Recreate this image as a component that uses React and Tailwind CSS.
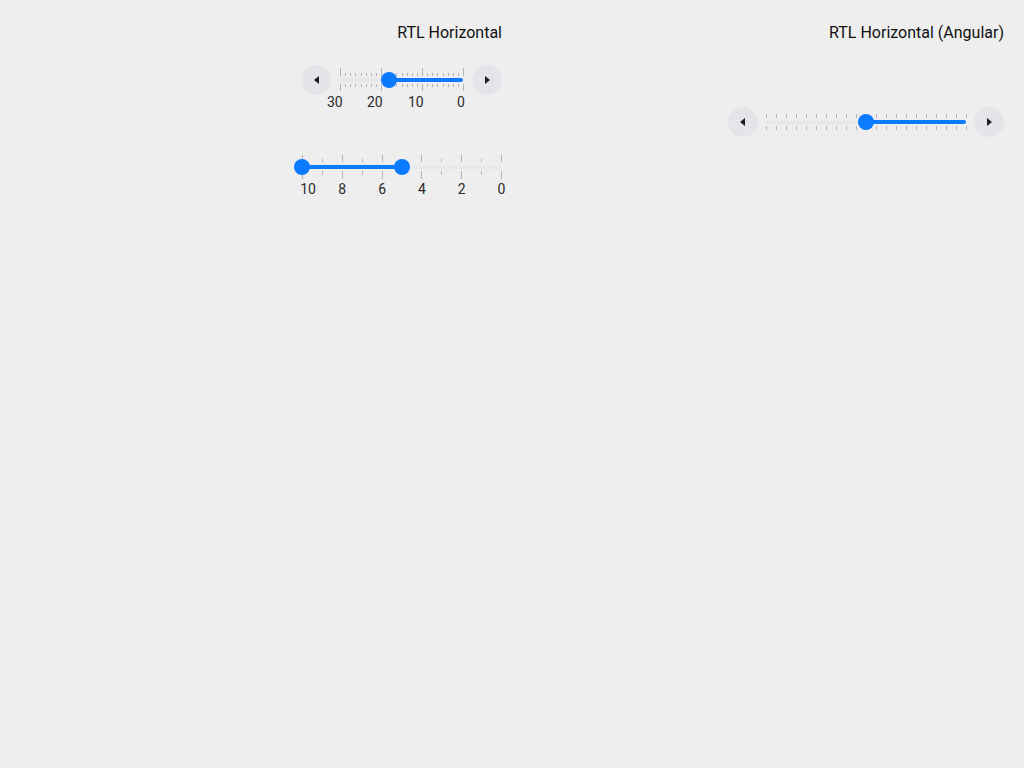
import React from 'react';

const Arrow = ({ dir }) => (
    <svg width="8" height="10" viewBox="0 0 8 10">
        {dir === 'left'
            ? <polygon points="6,1 6,9 1,5" fill="#1f1f1f" />
            : <polygon points="2,1 2,9 7,5" fill="#1f1f1f" />}
    </svg>
);

const StepButton = ({ dir }) => (
    <button className="w-[30px] h-[30px] shrink-0 rounded-full bg-[#e3e5e9] flex items-center justify-center">
        <Arrow dir={dir} />
    </button>
);

const Thumb = ({ x, y }) => (
    <div
        className="absolute w-4 h-4 -ml-2 -mt-2 rounded-full bg-[#0a7bff]"
        style={{ left: x, top: y }}
    />
);

// RTL ticks: position 0 = left edge
const Tick = ({ x, top, h }) => (
    <div className="absolute w-px bg-[#b4b4b4]" style={{ left: x, top, height: h }} />
);

const SliderOne = () => {
    const width = 123;
    const ticks = Array.from({ length: 25 }, (_, i) => i);
    const thumb = width - 18 * width / 30;
    const labels = [
        { text: '30', left: -13 },
        { text: '20', left: 27 },
        { text: '10', left: 68 },
        { text: '0', left: 117 },
    ];
    return (
        <div className="flex items-center gap-2">
            <StepButton dir="left" />
            <div className="relative w-[124px] h-[30px]">
                <div className="absolute left-0 top-[13px] w-[123px] h-[4px] rounded-full bg-[#e6e8eb]" />
                <div className="absolute top-[13px] h-[4px] rounded-full bg-[#0a7bff]" style={{ left: thumb, width: width - thumb }} />
                {ticks.map((i) => {
                    const x = Math.round(i * width / 24);
                    const major = i % 8 === 0;
                    return (
                        <React.Fragment key={i}>
                            <Tick x={x} top={major ? 3 : 8} h={major ? 8 : 3} />
                            <Tick x={x} top={19} h={major ? 7 : 3} />
                        </React.Fragment>
                    );
                })}
                <Thumb x={thumb} y={15} />
                {labels.map((l) => (
                    <span key={l.text} className="absolute top-[27px] text-sm leading-5 text-[#2b2b2b]" style={{ left: l.left }}>
                        {l.text}
                    </span>
                ))}
            </div>
            <StepButton dir="right" />
        </div>
    );
};

const SliderTwo = () => {
    const width = 199;
    const pos = (v) => (10 - v) * width / 10;
    const labels = [10, 8, 6, 4, 2, 0];
    return (
        <div className="relative w-[200px] h-[32px]">
            <div className="absolute left-0 top-[15px] w-[199px] h-[3px] rounded-full bg-[#e6e8eb]" />
            <div className="absolute top-[14px] h-[4px] bg-[#0a7bff]" style={{ left: pos(10), width: pos(5) - pos(10) }} />
            {Array.from({ length: 11 }, (_, k) => {
                const x = Math.round(k * width / 10);
                const major = k % 2 === 0;
                return (
                    <React.Fragment key={k}>
                        <Tick x={x} top={major ? 4 : 8} h={major ? 7 : 3} />
                        <Tick x={x} top={20} h={major ? 8 : 4} />
                    </React.Fragment>
                );
            })}
            <Thumb x={pos(10)} y={16} />
            <Thumb x={pos(5)} y={16} />
            {labels.map((v) => (
                <span
                    key={v}
                    className="absolute top-[28px] text-sm leading-5 text-[#2b2b2b] -translate-x-1/2"
                    style={{ left: v === 10 ? 6 : pos(v) + 0.5 }}
                >
                    {v}
                </span>
            ))}
        </div>
    );
};

const SliderThree = () => (
    <div className="flex items-center gap-2">
        <StepButton dir="left" />
        <div className="relative w-[200px] h-[30px]">
            <div className="absolute left-0 top-[14px] w-[200px] h-[3px] rounded-full bg-[#e6e8eb]" />
            <div className="absolute left-[100px] top-[13px] w-[100px] h-[4px] rounded-full bg-[#0a7bff]" />
            {Array.from({ length: 21 }, (_, k) => (
                <React.Fragment key={k}>
                    <Tick x={k * 10 - 0.5} top={7} h={4} />
                    <Tick x={k * 10 - 0.5} top={19} h={4} />
                </React.Fragment>
            ))}
            <Thumb x={100} y={15} />
        </div>
        <StepButton dir="right" />
    </div>
);

const App = () => {
    return (
        <div className="min-h-screen w-full bg-[#eeeeee] font-['Roboto',sans-serif] text-[#1a1a1a]">
            <div className="grid grid-cols-2 gap-5 px-5 pt-[21px]">
                <div className="flex flex-col items-end">
                    <h2 className="text-base leading-6 text-[#111]">RTL Horizontal</h2>
                    <div className="mt-5">
                        <SliderOne />
                    </div>
                    <div className="mt-[56px]">
                        <SliderTwo />
                    </div>
                </div>
                <div className="flex flex-col items-end">
                    <h2 className="text-base leading-6 text-[#111]">RTL Horizontal (Angular)</h2>
                    <div className="mt-[62px]">
                        <SliderThree />
                    </div>
                </div>
            </div>
        </div>
    );
};

export default App;
